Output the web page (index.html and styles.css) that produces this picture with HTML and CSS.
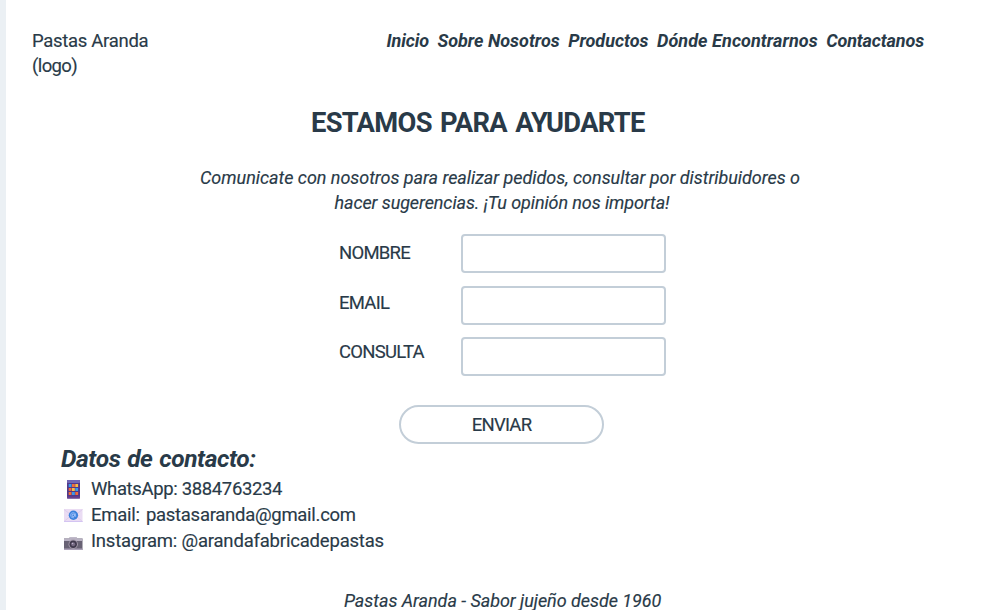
FILE: index.html
```
<!DOCTYPE html>
<html lang="es">
<head>
<meta charset="utf-8">
<title>Pastas Aranda - Contacto</title>
<link rel="stylesheet" href="styles.css">
</head>
<body>
<div class="page">
  <header class="header">
    <div class="brand"><span>Pastas Aranda</span><br><span class="logo">(logo)</span></div>
    <nav class="nav">
      <a class="inicio">Inicio</a><a class="sobre">Sobre Nosotros</a><a class="productos">Productos</a><a class="donde">Dónde Encontrarnos</a><a class="contacto">Contactanos</a>
    </nav>
  </header>
  <main>
    <h1>ESTAMOS PARA AYUDARTE</h1>
    <p class="intro"><span class="l1">Comunicate con nosotros para realizar pedidos, consultar por distribuidores o</span><br><span class="l2">hacer sugerencias. ¡Tu opinión nos importa!</span></p>
    <form class="form">
      <div class="labels">
        <label for="nombre">NOMBRE</label>
        <label for="email">EMAIL</label>
        <label for="consulta">CONSULTA</label>
      </div>
      <div class="fields">
        <input id="nombre" type="text">
        <input id="email" type="text">
        <input id="consulta" type="text">
      </div>
      <button type="button">ENVIAR</button>
    </form>
    <section class="contact">
      <h2>Datos de contacto:</h2>
      <ul>
        <li>
          <svg width="20" height="20" viewBox="0 0 20 20"><rect x="4" y="1" width="13" height="18.500" rx=".8" fill="#51388a"/><rect x="4" y="1" width="13" height="3" rx=".8" fill="#7167b5"/><rect x="4" y="17.500" width="13" height="2" fill="#69408d"/><path d="M5.700 5h2.800v2.900H5.700zM12.300 9h2.800v2.900h-2.800zM9 13h2.800v2.900H9z" fill="#3b9be8"/><path d="M9 5h2.800v2.900H9zM5.700 13h2.800v2.900H5.700zM12.300 13h2.800v2.900h-2.800z" fill="#f26d38"/><path d="M12.300 5h2.800v2.900h-2.800zM9 9h2.800v2.900H9z" fill="#f7bd46"/><path d="M5.700 9h2.800v2.900H5.700z" fill="#f26d38"/></svg>
          <span class="wa">WhatsApp: 3884763234</span>
        </li>
        <li>
          <svg width="20" height="20" viewBox="0 0 20 20"><rect x="1" y="4" width="18.500" height="13" rx=".5" fill="#eadcf3"/><path d="M1 4.500l9.200 7 9.300-7M1 16.500l6-5M19.500 16.500l-6-5" fill="none" stroke="#d9c5e9" stroke-width=".7"/><path d="M1 16.500h18.500" stroke="#d3c4f2"/><circle cx="10.400" cy="10.300" r="4.700" fill="#3d82dc"/><circle cx="10.300" cy="10.300" r="1.300" fill="none" stroke="#b9ceff" stroke-width=".9"/><path d="M11.700 8.800v2q.2 1 1 .5.600-3.500-2.400-3.800-2.900.2-2.800 2.900.300 2.800 3.600 2.500" fill="none" stroke="#a8c4fb" stroke-width=".7"/></svg>
          <span class="em">Email: pastasaranda@gmail.com</span>
        </li>
        <li class="camera">
          <svg width="20" height="20" viewBox="0 0 20 20"><path d="M3 6.500h3v-.8h8V6.500h5.500V18H1V6.500z" fill="#686274"/><path d="M1 6.500h5l1-1.200h6.500l1 1.200h5v2.600H1z" fill="#b8b1c2"/><path d="M1 16.500h18.500V18H1z" fill="#aaa0b6"/><circle cx="10.200" cy="12.300" r="4.700" fill="#a59bac"/><circle cx="10.200" cy="12.300" r="3.700" fill="#40394d"/><circle cx="10.200" cy="12.300" r="2" fill="#776b83"/><circle cx="9.500" cy="11.500" r=".8" fill="#c1b6cf"/></svg>
          <span class="ig">Instagram: @arandafabricadepastas</span>
        </li>
      </ul>
    </section>
  </main>
  <footer>Pastas Aranda - Sabor jujeño desde 1960</footer>
</div>
</body>
</html>
```
FILE: styles.css
```
* { box-sizing: border-box; }
body {
  margin: 0;
  height: 610px;
  overflow: hidden;
  background: #fff;
  color: #293a48;
  font: 18.5px/25px Roboto, "Liberation Sans", sans-serif;
  -webkit-text-stroke: .15px #293a48;
}
.page { height: 610px; overflow: hidden; border-left: 6px solid #ebf0f4; }
.header { display: flex; justify-content: space-between; padding: 28px 74px 0 26px; height: 104px; }
.brand { padding-top: 1px; letter-spacing: -.3px; }
.logo { letter-spacing: -.6px; }
.nav { display: flex; gap: 8.4px; font-weight: 700; font-style: italic; font-size: 18px; white-space: nowrap; -webkit-text-stroke: 0; }
.inicio { letter-spacing: -.1px; }
.donde { letter-spacing: .08px; }
.contacto { letter-spacing: -.13px; }
h1 { margin: 0; padding-left: 305px; font-size: 27.3px; line-height: 38px; font-weight: 700; letter-spacing: -.68px; word-spacing: 2.2px; white-space: nowrap; -webkit-text-stroke: 0; }
.intro { margin: 23px 0 0; width: 988px; text-align: center; font-style: italic; font-size: 18px; white-space: nowrap; }
.l1 { letter-spacing: -.04px; }
.l2 { letter-spacing: -.1px; padding-left: 4px; }
.form { display: grid; grid-template-columns: 122px 205px; margin: 19px 0 0 333px; }
.labels { height: 142px; padding-top: 7px; letter-spacing: -.75px; }
.labels label { display: block; height: 49.5px; }
.fields { display: flex; flex-direction: column; gap: 12.5px; }
input { width: 205px; height: 39px; border: 2px solid #c3ced8; border-radius: 4px; background: #fff; padding: 0 8px; }
button {
  grid-column: 1 / 3;
  width: 205px;
  height: 39px;
  margin: 29px 0 0 60px;
  padding: 2px 0 0;
  border: 2px solid #c3ced8;
  border-radius: 20px;
  background: #fff;
  color: inherit;
  font: inherit;
  letter-spacing: -.75px;
}
.contact { padding-left: 55px; }
h2 { margin: 0 0 3px; font-size: 24.5px; line-height: 29px; font-style: italic; font-weight: 700; letter-spacing: -.4px; word-spacing: 1px; -webkit-text-stroke: 0; }
ul { margin: 0; padding: 0 0 0 2px; list-style: none; }
li { display: flex; gap: 8px; height: 26px; line-height: 26px; }
svg { display: block; flex: none; margin-top: 3px; }
.camera svg { margin-top: 4px; }
.wa { letter-spacing: -.35px; }
.em { letter-spacing: -.28px; word-spacing: 2px; }
.ig { letter-spacing: -.19px; }
footer { margin: 34px 0 0 338px; font-style: italic; font-size: 18px; letter-spacing: -.05px; white-space: nowrap; }
```
